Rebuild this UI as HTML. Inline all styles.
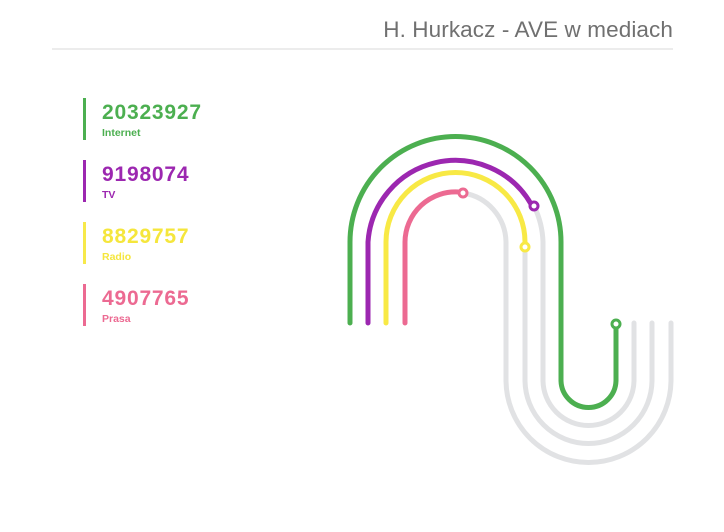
<!DOCTYPE html>
<html><head><meta charset="utf-8"><style>
html,body{margin:0;padding:0;background:#fff;width:724px;height:532px;overflow:hidden;font-family:"Liberation Sans",sans-serif}
.t{position:absolute;right:51px;top:17px;font-size:22.5px;color:#707070;white-space:nowrap;letter-spacing:0.1px}
.hr{position:absolute;left:52px;top:48px;width:621px;height:2px;background:#ececec}
.it{position:absolute;left:83px;width:200px;height:42px;border-left:3px solid}
.n{position:absolute;left:16px;top:3px;font-size:21px;font-weight:bold;line-height:24px;letter-spacing:0.8px}
.l{position:absolute;left:16px;top:29px;font-size:10.5px;font-weight:bold;line-height:12px}
</style></head><body>
<div class="t">H. Hurkacz - AVE w mediach</div>
<div class="hr"></div>
<div class="it" style="top:98px;border-color:#4caf50;color:#4caf50"><div class="n">20323927</div><div class="l">Internet</div></div>
<div class="it" style="top:160px;border-color:#9c27b0;color:#9c27b0"><div class="n">9198074</div><div class="l">TV</div></div>
<div class="it" style="top:222px;border-color:#f7e94a;color:#f5e63c"><div class="n">8829757</div><div class="l">Radio</div></div>
<div class="it" style="top:284px;border-color:#ec6a92;color:#ec6a92"><div class="n">4907765</div><div class="l">Prasa</div></div>
<svg width="724" height="532" style="position:absolute;left:0;top:0" fill="none" stroke-width="5" stroke-linecap="round">
<g stroke="#e1e2e4">
<path d="M534 206 A87.5 87.5 0 0 1 543 242 L543 380 A45.5 45.5 0 0 0 634 380 L634 323"/>
<path d="M525 247 L525 380 A63.5 63.5 0 0 0 652 380 L652 323"/>
<path d="M463 193 A50.5 50.5 0 0 1 506 242 L506 380 A82.5 82.5 0 0 0 671 380 L671 323"/>
</g>
<path stroke="#4caf50" d="M350 323 L350 242 A105.5 105.5 0 0 1 561 242 L561 380 A27.5 27.5 0 0 0 616 380 L616 327"/>
<path stroke="#9c27b0" d="M368 323 L368 242 A87.5 87.5 0 0 1 531 204"/>
<path stroke="#f8e945" d="M386 323 L386 242 A69.5 69.5 0 0 1 525 242 L525 244"/>
<path stroke="#ec6a92" d="M405 323 L405 242 A50.5 50.5 0 0 1 459 192"/>
<g stroke-width="3" fill="#fff">
<circle cx="616" cy="324" r="4" stroke="#4caf50"/>
<circle cx="534" cy="206" r="4" stroke="#9c27b0"/>
<circle cx="525" cy="247" r="4" stroke="#f8e945"/>
<circle cx="463" cy="193" r="4" stroke="#ec6a92"/>
</g>
</svg>
</body></html>
